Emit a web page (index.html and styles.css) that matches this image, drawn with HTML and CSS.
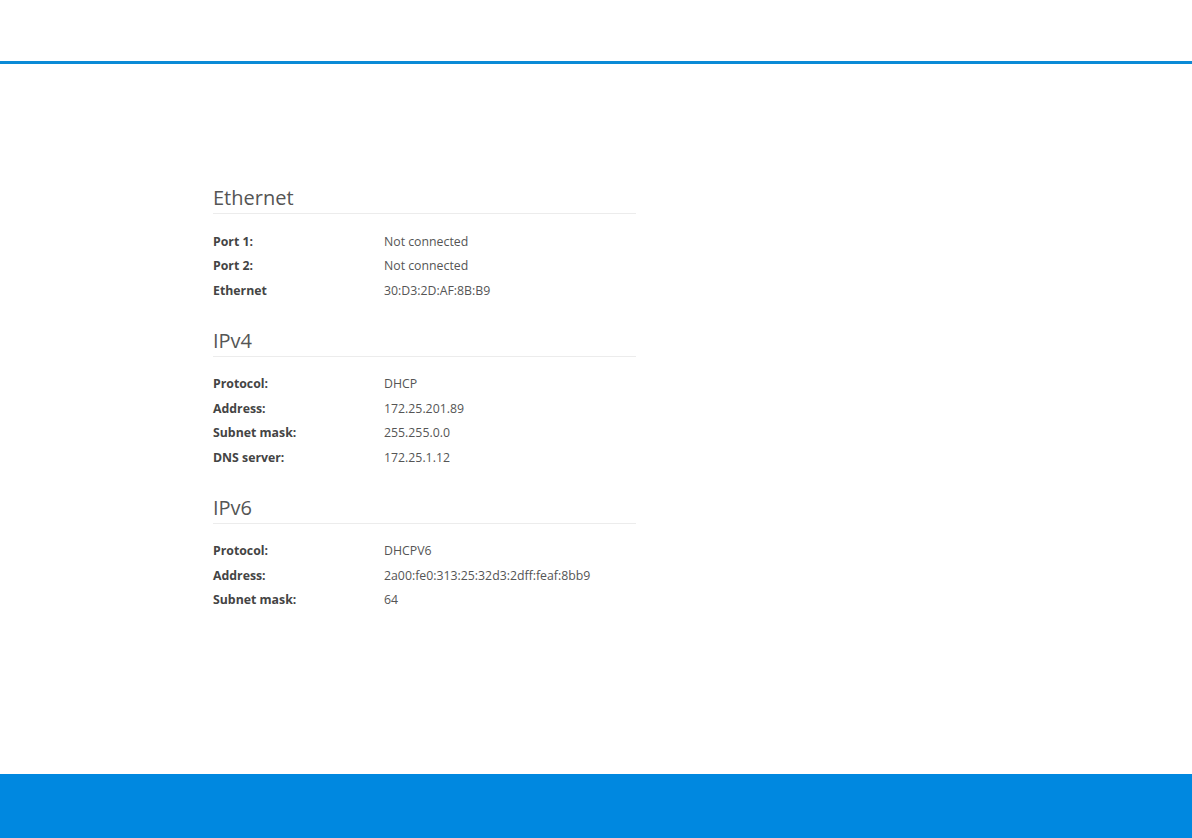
FILE: index.html
```html
<!DOCTYPE html>
<html lang="en">
<head>
    <meta charset="UTF-8">
    <title>Network status</title>
    <link rel="stylesheet" href="styles.css">
</head>
<body>
    <header class="topbar"></header>

    <main class="content">
        <section class="status-block">
            <h2 class="status-title">Ethernet</h2>
            <dl class="status-list">
                <dt>Port 1:</dt><dd>Not connected</dd>
                <dt>Port 2:</dt><dd>Not connected</dd>
                <dt>Ethernet</dt><dd>30:D3:2D:AF:8B:B9</dd>
            </dl>
        </section>

        <section class="status-block">
            <h2 class="status-title">IPv4</h2>
            <dl class="status-list">
                <dt>Protocol:</dt><dd>DHCP</dd>
                <dt>Address:</dt><dd>172.25.201.89</dd>
                <dt>Subnet mask:</dt><dd>255.255.0.0</dd>
                <dt>DNS server:</dt><dd>172.25.1.12</dd>
            </dl>
        </section>

        <section class="status-block">
            <h2 class="status-title">IPv6</h2>
            <dl class="status-list">
                <dt>Protocol:</dt><dd>DHCPV6</dd>
                <dt>Address:</dt><dd>2a00:fe0:313:25:32d3:2dff:feaf:8bb9</dd>
                <dt>Subnet mask:</dt><dd>64</dd>
            </dl>
        </section>
    </main>

    <footer class="bottombar"></footer>
</body>
</html>
```

FILE: styles.css
```css
/* Reset */
* {
    margin: 0;
    padding: 0;
    box-sizing: border-box;
}

body {
    font-family: 'Open Sans', 'Liberation Sans', sans-serif;
    background-color: #ffffff;
    color: #555;
    height: 838px;
    display: flex;
    flex-direction: column;
    overflow: hidden;
}

/* Header */
.topbar {
    height: 64px;
    border-bottom: 3px solid #0b8ad6;
    flex-shrink: 0;
}

/* Main content */
.content {
    flex: 1;
    padding: 122px 0 0 213px;
}

.status-block {
    width: 423px;
    margin-bottom: 25.5px;
}

.status-title {
    font-size: 20px;
    font-weight: 400;
    line-height: 24px;
    color: #555;
    padding-bottom: 3px;
    border-bottom: 1px solid #ececec;
    margin-bottom: 15.5px;
}

.status-list {
    display: grid;
    grid-template-columns: 171px 1fr;
    font-size: 12.3px;
    line-height: 24.5px;
}

.status-list dt {
    font-weight: 700;
    color: #444;
}

.status-list dd {
    color: #555;
}

/* Footer */
.bottombar {
    height: 64px;
    background-color: #0088e0;
    flex-shrink: 0;
}
```
